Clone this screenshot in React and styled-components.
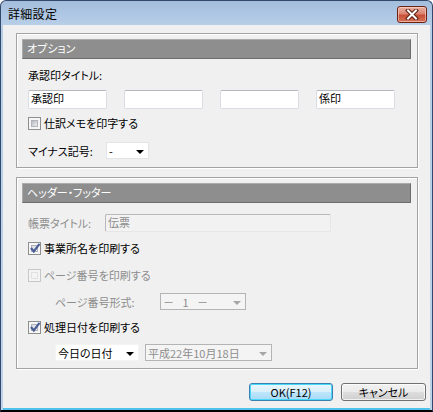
import React from 'react';
import styled, { createGlobalStyle, css } from 'styled-components';

const GlobalStyle = createGlobalStyle`
  html, body {
    margin: 0;
    padding: 0;
    background: #fff;
  }
  body {
    font-family: "Noto Sans CJK JP", "Noto Sans", sans-serif;
    font-size: 11px;
    font-feature-settings: "palt";
    color: #000;
  }
  * {
    box-sizing: border-box;
  }
`;

const Window = styled.div`
  width: 433px;
  height: 412px;
  display: flex;
  flex-direction: column;
  border: 1px solid #34496a;
  border-bottom: 2px solid #000;
  border-radius: 6px 6px 0 0;
  background: linear-gradient(#a3bedd 0px, #b7cee8 24px, #bcd3ea 100%);
  overflow: hidden;
`;

const TitleBar = styled.div`
  height: 24px;
  flex: none;
  display: flex;
  align-items: center;
  justify-content: space-between;
  padding: 0 5px 0 7px;
`;

const Title = styled.span`
  font-size: 12px;
  line-height: 14px;
  letter-spacing: 0.3px;
  margin-top: 1px;
`;

const CloseButton = styled.div`
  width: 30px;
  height: 17px;
  margin-top: 3px;
  border: 1px solid #6b2114;
  border-radius: 3px;
  background: linear-gradient(#eab0a2 0%, #da8470 45%, #c94e37 55%, #d47456 100%);
  box-shadow: inset 0 0 0 1px rgba(255, 220, 210, 0.55);
  display: flex;
  align-items: center;
  justify-content: center;
`;

const Client = styled.div`
  flex: 1;
  margin: 0 2px;
  background: #f0f0f0;
  border-bottom: 2px solid #4ec2ea;
  display: flex;
  flex-direction: column;
  padding: 8px 4px 0 13px;
`;

const Group = styled.section`
  width: 402px;
  margin-top: ${p => p.$top || 0}px;
  border: 1px solid #a3a3a3;
  box-shadow: inset 1px 1px 0 #fff, 1px 1px 0 #fff;
  display: flex;
  flex-direction: column;
`;

const GroupHeader = styled.div`
  height: 20px;
  margin: 5px 6px 0 5px;
  background: #8e8e8e;
  border: 1px solid;
  border-color: #ababab #6c6c6c #6c6c6c #ababab;
  color: #fff;
  padding-left: 4px;
  line-height: 17px;
  font-size: 11px;
`;

const GroupBody = styled.div`
  display: flex;
  flex-direction: column;
  padding: 0 0 ${p => p.$bottom}px 11px;
`;

const Row = styled.div`
  display: flex;
  align-items: center;
  gap: ${p => p.$gap || 0}px;
  margin-top: ${p => p.$top || 0}px;
  padding-left: ${p => p.$indent || 0}px;
`;

const Label = styled.span`
  display: inline-block;
  width: ${p => (p.$w ? `${p.$w}px` : 'auto')};
  line-height: 14px;
  color: ${p => (p.$disabled ? '#8d8d8d' : '#000')};
  white-space: nowrap;
`;

const TextBox = styled.div`
  width: ${p => p.$w}px;
  height: ${p => p.$h || 19}px;
  background: ${p => (p.$disabled ? '#f2f2f2' : '#fff')};
  border: 1px solid #d9dce2;
  border-top-color: #b4b8be;
  border-radius: 2px;
  padding: 0 2px;
  line-height: ${p => (p.$h || 19) - 4}px;
  color: ${p => (p.$disabled ? '#8d8d8d' : '#000')};
  ${p => p.$disabled && css`
    border-color: #b9b9b9 #e6e6e6 #e6e6e6 #b9b9b9;
    line-height: 14px;
  `}
`;

const Combo = styled.div`
  width: ${p => p.$w}px;
  height: 17px;
  display: flex;
  align-items: center;
  justify-content: space-between;
  padding: 0 4px 0 2px;
  background: ${p => (p.$disabled ? '#f4f4f4' : '#fff')};
  border: 1px solid ${p => (p.$disabled ? '#b4b4b4' : p.$plain ? '#f4f4f4' : '#e2e4e8')};
  color: ${p => (p.$disabled ? '#8d8d8d' : '#000')};
  line-height: 14px;
  white-space: nowrap;
`;

const ComboText = styled.span`
  letter-spacing: ${p => p.$spacing || 0}px;
`;

const Arrow = styled.span`
  width: 0;
  height: 0;
  border-left: 4px solid transparent;
  border-right: 4px solid transparent;
  border-top: 4px solid ${p => (p.$disabled ? '#a6a6a6' : '#000')};
  margin-top: 2px;
`;

const CheckRow = styled.label`
  display: flex;
  align-items: center;
  gap: 3px;
  height: 14px;
  margin-top: ${p => p.$top || 0}px;
  color: ${p => (p.$disabled ? '#8d8d8d' : '#000')};
`;

const Box = styled.span`
  position: relative;
  width: 13px;
  height: 13px;
  flex: none;
  border: 1px solid ${p => (p.$disabled ? '#c7c7c7' : '#8e8f8f')};
  background: ${p => (p.$disabled ? '#f4f4f4' : '#f6f6f6')};
  padding: 2px;
`;

const BoxInner = styled.span`
  display: block;
  width: 7px;
  height: 7px;
  border: 1px solid ${p => (p.$disabled ? '#e1e1e1' : '#b0b4ba')};
  background: ${p =>
    p.$disabled
      ? '#f4f4f4'
      : p.$checked
      ? 'linear-gradient(135deg, #d8dbe0, #f8f8f8)'
      : 'linear-gradient(135deg, #b5b9bf, #eeeff0)'};
`;

const Tick = styled.svg`
  position: absolute;
  left: 0px;
  top: -1px;
`;

const ButtonRow = styled.div`
  display: flex;
  justify-content: flex-end;
  gap: 8px;
  margin-top: 14px;
`;

const Button = styled.div`
  width: ${p => p.$w}px;
  height: 18px;
  display: flex;
  align-items: center;
  justify-content: center;
  font-size: 11px;
  border: 1px solid #707070;
  border-radius: 3px;
  background: linear-gradient(#f2f2f2 0%, #ebebeb 48%, #dddddd 52%, #cfcfcf 100%);
  box-shadow: inset 0 0 0 1px rgba(255, 255, 255, 0.7);
  ${p => p.$default && css`
    border-color: #3c7fb1;
    background: linear-gradient(#eaf6fd 0%, #d9f0fc 48%, #bee6fd 52%, #a7d9f5 100%);
    box-shadow: inset 0 0 0 1px #48d8fb;
  `}
`;

function CheckBox({ checked, disabled, top, children }) {
  return (
    <CheckRow $top={top} $disabled={disabled}>
      <Box $disabled={disabled}>
        <BoxInner $disabled={disabled} $checked={checked} />
        {checked && (
          <Tick width="12" height="12" viewBox="0 0 12 12">
            <path d="M2 6 L4.8 9.5 L10.5 1.8" fill="none" stroke="#4b5f97" strokeWidth="2.2" />
          </Tick>
        )}
      </Box>
      <span>{children}</span>
    </CheckRow>
  );
}

function Dropdown({ w, disabled, plain, children, spacing }) {
  return (
    <Combo $w={w} $disabled={disabled} $plain={plain}>
      <ComboText $spacing={spacing}>{children}</ComboText>
      <Arrow $disabled={disabled} />
    </Combo>
  );
}

const stampTitles = ['承認印', '', '', '係印'];

export default function App() {
  return (
    <>
      <GlobalStyle />
      <Window>
        <TitleBar>
          <Title>詳細設定</Title>
          <CloseButton>
            <svg width="14" height="11" viewBox="0 0 14 11">
              <path d="M3 1.5 L11 9.5 M11 1.5 L3 9.5" stroke="#5a1a10" strokeWidth="4" strokeLinecap="square" />
              <path d="M3 1.5 L11 9.5 M11 1.5 L3 9.5" stroke="#fff" strokeWidth="2" strokeLinecap="square" />
            </svg>
          </CloseButton>
        </TitleBar>
        <Client>
          <Group>
            <GroupHeader>オプション</GroupHeader>
            <GroupBody $bottom={8}>
              <Row $top={9}>
                <Label>承認印タイトル:</Label>
              </Row>
              <Row $top={8} $gap={17}>
                {stampTitles.map((t, i) => (
                  <TextBox key={i} $w={79}>{t}</TextBox>
                ))}
              </Row>
              <CheckBox top={7}>仕訳メモを印字する</CheckBox>
              <Row $top={12}>
                <Label $w={78}>マイナス記号:</Label>
                <Dropdown w={43}>-</Dropdown>
              </Row>
            </GroupBody>
          </Group>

          <Group $top={9}>
            <GroupHeader>ヘッダー・フッター</GroupHeader>
            <GroupBody $bottom={7}>
              <Row $top={11}>
                <Label $w={77} $disabled>帳票タイトル:</Label>
                <TextBox $w={226} $h={18} $disabled>伝票</TextBox>
              </Row>
              <CheckBox top={9} checked>事業所名を印刷する</CheckBox>
              <CheckBox top={13} disabled>ページ番号を印刷する</CheckBox>
              <Row $top={11} $indent={27}>
                <Label $w={105} $disabled>ページ番号形式:</Label>
                <Dropdown w={86} disabled spacing={3}>－ 1 －</Dropdown>
              </Row>
              <CheckBox top={10} checked>処理日付を印刷する</CheckBox>
              <Row $top={10} $indent={27} $gap={6}>
                <Dropdown w={84} plain>今日の日付</Dropdown>
                <Dropdown w={127} disabled>平成22年10月18日</Dropdown>
              </Row>
            </GroupBody>
          </Group>

          <ButtonRow>
            <Button $w={84} $default>OK(F12)</Button>
            <Button $w={85}>キャンセル</Button>
          </ButtonRow>
        </Client>
      </Window>
    </>
  );
}
